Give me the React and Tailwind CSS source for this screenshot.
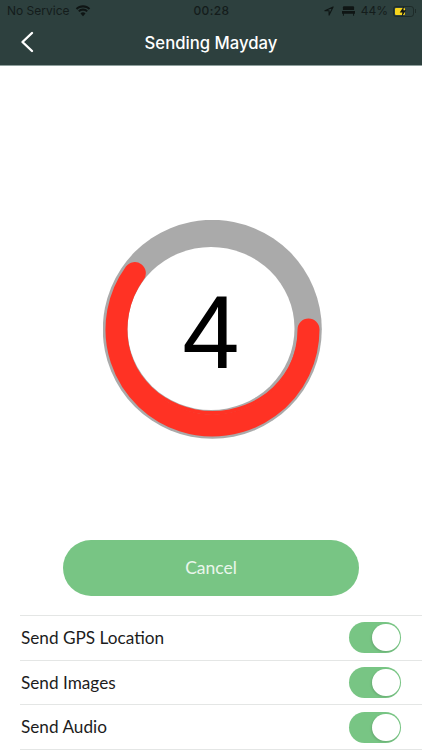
import React from "react";

const Toggle = () => (
  <div className="flex h-[31px] w-[52px] items-center justify-end rounded-full bg-[#78c584] pr-[1.5px]">
    <div className="h-[27px] w-[28px] rounded-full bg-white shadow-[-1px_1px_2px_rgba(0,0,0,0.12)]" />
  </div>
);

const Row = ({ label }) => (
  <div className="flex h-[44.7px] items-center justify-between border-b border-[#e4e6e5] pl-[1px] pr-[21px]">
    <span className="text-[17.2px] text-[#1c1c1c]">{label}</span>
    <Toggle />
  </div>
);

function Ring() {
  const cx = 109.5, cy = 109.5, r = 96;
  const a = (216 * Math.PI) / 180;
  const x2 = cx + r * Math.cos(a);
  const y2 = cy + r * Math.sin(a);
  return (
    <div className="relative h-[220px] w-[220px]">
      <svg width="220" height="220" viewBox="0 0 220 220">
        <circle cx={cx - 0.2} cy={cy - 0.2} r="109.5" fill="#aaaaaa" />
        <ellipse cx={cx - 1.5} cy={cy - 1} rx="83.5" ry="81.5" fill="#ffffff" />
        <path
          d={`M ${cx + r} ${cy} A ${r} ${r} 0 1 1 ${x2} ${y2}`}
          fill="none"
          stroke="#ff3224"
          strokeWidth="22"
          strokeLinecap="round"
        />
        <path
          d={`M ${cx + 85.5} ${cy} A 85.500 85.500 0 0 1 ${cx - 85.5} ${cy} A 85.500 81.500 0 0 0 ${cx + 85.5} ${cy} Z`}
          fill="#ff3224"
        />
      </svg>
      <div className="absolute inset-0 flex items-center justify-center pr-[3px] pt-[5px] font-['Liberation_Sans',sans-serif] text-[103px] leading-none text-black">
        4
      </div>
    </div>
  );
}

export default function App() {
  return (
    <div className="h-[750px] w-[422px] overflow-hidden bg-white font-['Lato',sans-serif]">
      <header className="h-[66px] border-b border-[#8fa09d] bg-[#2d403e]">
        <div className="flex h-[22px] items-center justify-between pl-[7px] pr-[6px] font-['Inter',sans-serif] text-[12px] text-[#141c1b]">
          <div className="flex w-[150px] items-center gap-[5px]">
            <span>No Service</span>
            <svg width="16" height="12" viewBox="0 0 16 12" fill="#0f1514">
              <path d="M8 2.4c2.3 0 4.3.9 5.8 2.3L15.2 3.3C13.3 1.4 10.8.3 8 .3S2.700 1.400.800 3.300l1.400 1.400C3.700 3.300 5.700 2.400 8 2.400z" />
              <path d="M8 5.700c1.400 0 2.600.500 3.500 1.400l1.400-1.400C11.600 4.400 9.900 3.600 8 3.600s-3.600.800-4.900 2.100l1.400 1.400C5.400 6.200 6.600 5.700 8 5.700z" />
              <path d="M8 11.300l2.500-2.900C9.800 7.700 8.900 7.300 8 7.300s-1.800.400-2.500 1.100L8 11.300z" />
            </svg>
          </div>
          <span className="font-medium tracking-[0.4px]">00:28</span>
          <div className="flex w-[150px] items-center justify-end">
            <svg className="mr-[8px]" width="10" height="10" viewBox="0 0 11 11" fill="none" stroke="#0f1514" strokeWidth="1.200" strokeLinejoin="round">
              <path d="M10 1 1 5.200h4.600V10L10 1z" />
            </svg>
            <svg className="mr-[6px]" width="13" height="10" viewBox="0 0 14 10" fill="#0f1514">
              <path d="M2 0h10a1 1 0 0 1 1 1v3H1V1a1 1 0 0 1 1-1z" />
              <path d="M0 5h14v3h-1v2h-1V8H2v2H1V8H0V5z" />
            </svg>
            <span className="mr-[5px]">44%</span>
            <div className="flex items-center">
              <div className="relative h-[11px] w-[21px] rounded-[3px] border border-[#0f1514]/50 p-[1px]">
                <div className="h-full w-[10px] rounded-[1px] bg-[#f7d51d]" />
                <svg className="absolute left-[5px] top-[-2px]" width="8" height="13" viewBox="0 0 9 12" fill="#0f1514">
                  <path d="M5.500 0 .8 7h3l-.8 5 5-7.300H5L5.500 0z" />
                </svg>
              </div>
              <div className="ml-[1px] h-[4px] w-[1px] bg-[#0f1514]/50" />
            </div>
          </div>
        </div>
        <div className="relative flex h-[43px] items-center justify-center">
          <svg className="absolute left-[20px] top-[9px]" width="14" height="22" viewBox="0 0 14 22" fill="none" stroke="#ffffff" strokeWidth="2.400" strokeLinecap="round" strokeLinejoin="round">
            <path d="M12 2 2.500 11 12 20" />
          </svg>
          <span className="font-['Inter',sans-serif] text-[16.7px] font-medium text-white">Sending Mayday</span>
        </div>
      </header>
      <main>
        <div className="flex justify-center pl-[3px] pt-[154px]">
          <Ring />
        </div>
        <div className="mt-[100px] flex justify-center">
          <button className="h-[56px] w-[296px] rounded-[28px] bg-[#78c584] pt-[1px] text-[17.5px] text-[#eaf6ec]">Cancel</button>
        </div>
        <div className="ml-[20px] mt-[19px] border-t border-[#e4e6e5]">
          <Row label="Send GPS Location" />
          <Row label="Send Images" />
          <Row label="Send Audio" />
        </div>
      </main>
    </div>
  );
}
